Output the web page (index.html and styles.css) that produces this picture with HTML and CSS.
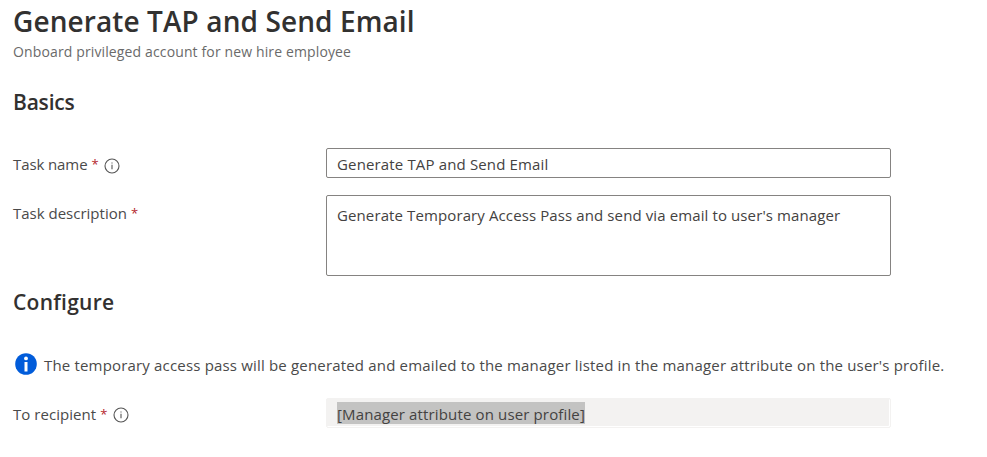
FILE: index.html
```html
<!DOCTYPE html>
<html lang="en">
<head>
<meta charset="utf-8">
<title>Generate TAP and Send Email</title>
<link rel="stylesheet" href="styles.css">
</head>
<body>
<main class="panel">
  <header>
    <h1 class="title">Generate TAP and Send Email</h1>
    <p class="subtitle">Onboard privileged account for new hire employee</p>
  </header>

  <section>
    <h2 class="heading basics">Basics</h2>
    <div class="row">
      <div class="label">
        <span>Task name</span><span class="required">*</span>
        <svg class="hint" viewBox="0 0 16 16" aria-hidden="true"><circle cx="8" cy="8" r="7"/><path d="M8 6.7v4.6M8 4.4v1.2"/></svg>
      </div>
      <div class="field name">Generate TAP and Send Email</div>
    </div>
    <div class="row description-row">
      <div class="label description"><span>Task description</span><span class="required">*</span></div>
      <div class="field area">Generate Temporary Access Pass and send via email to user's manager</div>
    </div>
  </section>

  <section>
    <h2 class="heading configure">Configure</h2>
    <div class="notice">
      <svg class="info" viewBox="0 0 22 22" aria-hidden="true"><circle class="disc" cx="11" cy="11" r="10.8"/><circle class="mark" cx="11" cy="5.4" r="1.9"/><path class="mark" d="M9.5 9h3v9.5h-3z"/></svg>
      <p class="message">The temporary access pass will be generated and emailed to the manager listed in the manager attribute on the user's profile.</p>
    </div>
    <div class="row">
      <div class="label recipient">
        <span>To recipient</span><span class="required">*</span>
        <svg class="hint" viewBox="0 0 16 16" aria-hidden="true"><circle cx="8" cy="8" r="7"/><path d="M8 6.7v4.6M8 4.4v1.2"/></svg>
      </div>
      <div class="field disabled"><span class="selected">[Manager attribute on user profile]</span></div>
    </div>
  </section>
</main>
</body>
</html>
```
FILE: styles.css
```css
* { box-sizing: border-box; }

body {
  margin: 0;
  background: #fff;
  color: #4a4a4a;
  font: 15px/20px "Open Sans", "Noto Sans", sans-serif;
}

h1, h2, p { margin: 0; }

.panel { padding: 3px 0 0 13px; }

.title {
  color: #323130;
  font-size: 28px;
  font-weight: 600;
  line-height: 36px;
  letter-spacing: 0.1px;
}

.subtitle {
  margin-top: 3px;
  color: #6a6a6a;
  font-size: 14px;
  letter-spacing: 0.13px;
}

.heading {
  color: #323130;
  font-size: 21px;
  font-weight: 600;
  line-height: 28px;
}

.basics {
  margin: 26px 0 32px;
  letter-spacing: -0.2px;
}

.configure {
  margin: 12px 0 33px;
  letter-spacing: 0.25px;
}

.row {
  display: grid;
  grid-template-columns: 313px 565px;
  align-items: start;
}

.description-row { margin-top: 17px; }

.label {
  display: flex;
  padding-top: 6px;
  letter-spacing: -0.1px;
}

.description {
  padding-top: 8px;
  letter-spacing: 0;
}

.recipient { letter-spacing: 0.05px; }

.required {
  width: 8px;
  margin-left: 4px;
  color: #b4262c;
  font-size: 13px;
}

.hint {
  width: 16px;
  height: 16px;
  margin: 3.5px 0 0 4.5px;
  fill: none;
  stroke: #555;
  stroke-width: 1.1;
}

.recipient .hint { margin-top: 2.5px; }

.field {
  height: 30px;
  padding: 5px 10px;
  border: 1px solid #858381;
  border-radius: 2px;
  color: #444241;
  letter-spacing: 0.15px;
}

.area {
  height: 81px;
  padding-top: 9px;
  letter-spacing: 0.11px;
}

.notice {
  display: flex;
  gap: 8px;
  height: 49px;
  padding: 2px 0 0 1px;
}

.info {
  width: 22px;
  height: 22px;
  margin: 1.5px -0.5px 0 0.5px;
}

.disc { fill: #015cda; }
.mark { fill: #fff; }

.message {
  padding-top: 4px;
  letter-spacing: 0.175px;
  white-space: nowrap;
}

.disabled {
  padding: 3px 10px;
  border-color: #f3f2f1;
  background: #f3f2f1;
  box-shadow: inset -1px -1px #fff;
  letter-spacing: 0.14px;
}

.selected {
  display: inline-block;
  height: 22px;
  padding-top: 2px;
  background: #c3c3c2;
  vertical-align: top;
}
```
